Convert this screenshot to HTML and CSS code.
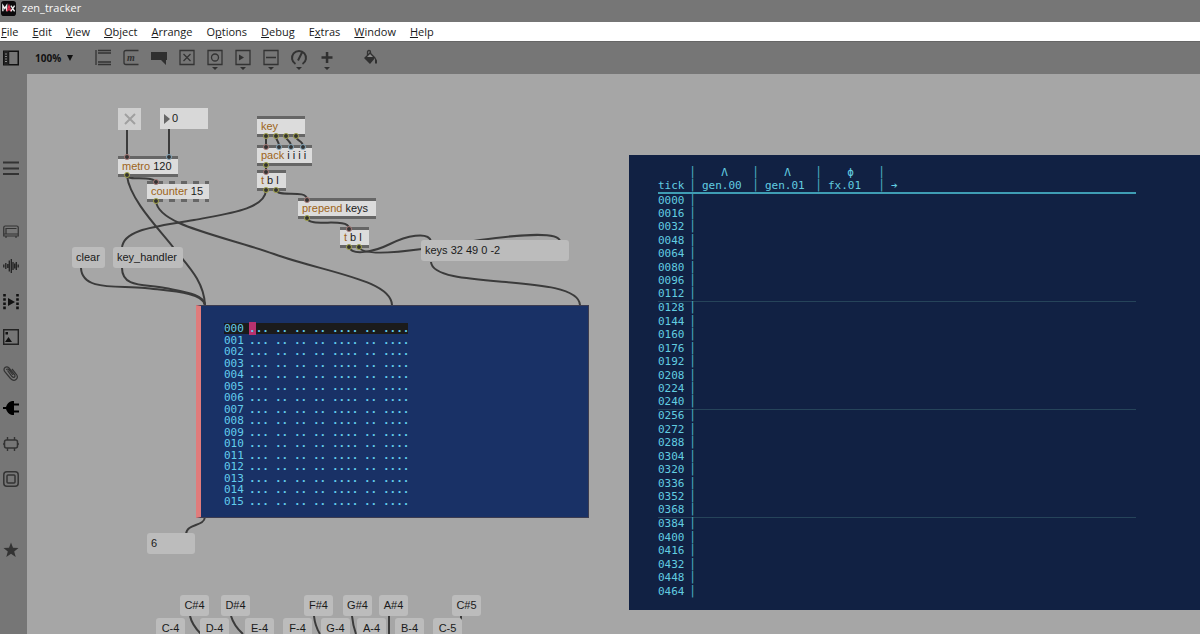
FILE: index.html
```html
<!DOCTYPE html>
<html lang="en">
<head>
<meta charset="utf-8">
<title>zen_tracker</title>
<link rel="stylesheet" href="styles.css">
</head>
<body>
<header class="titlebar">
  <svg class="logo" viewBox="0 0 16 16" aria-hidden="true"><rect width="16" height="16" rx="3" fill="#0c0a0c"/><g fill="none" stroke-width="1.5"><path d="M2 11V5l2 3 2-3v6" stroke="#eee"/><path d="M6.500 11 8.500 5l2 6M7 9.500h3" stroke="#e0304f"/><path d="m10.500 5 4 6m0-6-4 6" stroke="#eee"/></g></svg>
  <h1 class="title">zen_tracker</h1>
</header>
<nav class="menubar" aria-label="Main menu">
  <button><u>F</u>ile</button><button><u>E</u>dit</button><button><u>V</u>iew</button><button><u>O</u>bject</button><button><u>A</u>rrange</button><button>O<u>p</u>tions</button><button><u>D</u>ebug</button><button>E<u>x</u>tras</button><button><u>W</u>indow</button><button><u>H</u>elp</button>
</nav>
<div class="toolbar">
  <button class="tool side" aria-label="Toggle sidebar"><svg width="16" height="16" viewBox="0 0 16 16"><path d="M.75 1.250h14.500v13.500H.75zM5.500 1v14" fill="none" stroke="#111" stroke-width="1.500"/><path d="M1 1h4.500v14H1z" fill="#222"/><path d="M2 4h2M2 6.500h2M2 9h2M2 11.500h2" stroke="#888"/></svg></button>
  <label class="zoom"><select aria-label="Zoom"><option>100%</option></select><svg width="6" height="6" viewBox="0 0 6 6"><path d="M0 0h6L3 6z" fill="#111"/></svg></label>
  <div class="tools">
    <button class="tool" aria-label="Object"><svg viewBox="0 0 16 22"><path d="M1 3v15M3 3.500h13M3 6h13M3 15h13M3 17.500h13" class="l"/></svg></button>
    <button class="tool" aria-label="Message"><svg viewBox="0 0 16 22"><path d="M15.500 3.500H3q-2 0-2 2v10q0 2 2 2h12.500" class="l"/><text x="4" y="14" class="m">m</text></svg></button>
    <button class="tool" aria-label="Comment"><svg viewBox="0 0 16 22"><path d="M0 5h16v8h-1v5l-5-5H0z" class="f"/></svg></button>
    <button class="tool" aria-label="Toggle"><svg viewBox="0 0 16 22"><path d="M1 3.500h14v14H1zM4.500 7l7 7m0-7-7 7" class="l"/></svg></button>
    <button class="tool" aria-label="Button"><svg viewBox="0 0 16 22"><path d="M1 3.500h14v14H1z" class="l"/><circle cx="8" cy="10.500" r="3.500" class="l"/><path d="M5 20h6l-3 3z" class="f"/></svg></button>
    <button class="tool" aria-label="Number"><svg viewBox="0 0 16 22"><path d="M1 3.500h14v14H1z" class="l"/><path d="m4 7.500 5 3-5 3zM5 20h6l-3 3z" class="f"/></svg></button>
    <button class="tool" aria-label="Slider"><svg viewBox="0 0 16 22"><path d="M1 3.500h14v14H1zM3 10.500h10" class="l"/><path d="M5 20h6l-3 3z" class="f"/></svg></button>
    <button class="tool" aria-label="Dial"><svg viewBox="0 0 16 22"><path d="M4.500 17a7 7 0 1 1 7 0M7 13.500l4-8" class="l thick"/><path d="M5 20h6l-3 3z" class="f"/></svg></button>
    <button class="tool" aria-label="Add"><svg viewBox="0 0 16 22"><path d="M6.800 5h2.500v4.300h4.200v2.500H9.300V16H6.800v-4.200H2.500V9.300h4.300zM5 20h6l-3 3z" class="f"/></svg></button>
  </div>
  <button class="tool" aria-label="Format"><svg viewBox="0 0 16 22"><path d="M2 11 8 5l5.500 5.500L8 17zM13 10l2 3.500v3h-2v-4z" class="f"/><path d="M5.500 8V5q0-1.500 1.500-1.500T8.500 5v3" class="l"/><path d="m5 10 3-3 3 3z" fill="#8a8a8a"/></svg></button>
</div>
<div class="work">
  <aside class="sidebar" aria-label="Browser">
    <button class="icon" aria-label="List"><svg viewBox="0 0 16 16"><path d="M0 2.500h16M0 8.500h16M0 14h16" stroke="#333" stroke-width="2"/></svg></button>
    <div class="icon-group">
      <button class="icon" aria-label="Packages"><svg viewBox="0 0 16 16"><path d="M.75 4.500q0-1.500 1.500-1.500h11.500q1.500 0 1.500 1.500v8.500H.75zM3 5.500h10.500M1 11h14M3 13v2M13 13v2M3 5v6" fill="none" stroke="#333" stroke-width="1.200"/></svg></button>
      <button class="icon" aria-label="Audio"><svg viewBox="0 0 16 16"><path d="M.8 6.500v3M2.800 5v6M4.800 6v4M6.300 2.500v11M8.300 1v14M10 4v8M11.700 5.500v5M13.300 4v8M15.200 6.500v3" stroke="#222" stroke-width="1.300"/></svg></button>
      <button class="icon" aria-label="Video"><svg viewBox="0 0 16 16"><path d="M1.500 0v16M14.500 0v16" stroke="#111" stroke-width="2.600" stroke-dasharray="2.600 1.600"/><path d="m5 4 7 4-7 4z" fill="#111"/></svg></button>
      <button class="icon" aria-label="Images"><svg viewBox="0 0 16 16"><path d="M.7.7h14.600v14.600H.7z" fill="none" stroke="#222" stroke-width="1.400"/><path d="m2 13 3.500-5L9 13zM2.500 3h2.500v2.500H2.500z" fill="#111"/></svg></button>
      <button class="icon" aria-label="Files"><svg viewBox="0 0 16 16"><path d="M4.500 5.500 9 11.500q1.500 1.500 2.500.500t0-2.500L6 3Q4 .8 2 2.500T2 7l5.500 6.500q3 3 5.500 1t.5-5L9 4M3.500 5q.5-2 2.500 0l4 5" fill="none" stroke="#333" stroke-width="1.200"/></svg></button>
      <button class="icon" aria-label="Plug-ins"><svg viewBox="0 0 16 16"><path d="M0 7h3q1.500-5 6-6h2v2.500h5v2h-5v5h5v2h-5V15H9q-4.500-1-6-6H0z" fill="#000"/></svg></button>
      <button class="icon" aria-label="Devices"><svg viewBox="0 0 16 16"><rect x="1.500" y="4" width="13" height="8" rx="2" fill="none" stroke="#333" stroke-width="1.500"/><path d="M4.500 1v3M11.500 1v3M4.500 12v3M11.500 12v3M0 8h1.500M14.500 8H16" stroke="#333" stroke-width="1.400"/></svg></button>
      <button class="icon" aria-label="Snippets"><svg viewBox="0 0 16 16"><rect x=".8" y=".8" width="14.400" height="14.400" rx="3" fill="none" stroke="#333" stroke-width="1.500"/><rect x="4" y="4" width="8" height="8" rx="1" fill="none" stroke="#333" stroke-width="1.500"/></svg></button>
    </div>
    <button class="icon" aria-label="Favorites"><svg viewBox="0 0 16 16"><path d="m8 .5 2 5.300 5.500.2-4.300 3.500 1.500 5.500L8 11.800 3.300 15l1.500-5.500L.5 6l5.500-.2z" fill="#333"/></svg></button>
  </aside>
  <main class="canvas">
    <svg class="wires" width="1173" height="560" viewBox="27 74 1173 560" aria-hidden="true">
      <path d="M127 130V156M169 129V156"/>
      <path d="M127 176C128 181 155 175 156 183"/>
      <path d="M127 176C130 200 160 230 173 247S204 280 205 305"/>
      <path d="M156 201C158 225 220 235 274 254S391 280 392 305"/>
      <path d="M266 190C265 210 225 214 194 220S123 228 122 248"/>
      <path d="M81 268C82 292 120 285 145 288S203 292 205 305"/>
      <path d="M122 268C122 288 145 284 165 288S204 294 205 305"/>
      <path d="M276 190C278 198 306 189 307 199M307 218C309 228 348 217 349 228"/>
      <path d="M349 247C352 256 374 252 390 244S428 231 431 241"/>
      <path d="M359 247C362 256 400 252 422 249L480 240C510 236 558 230 560 241"/>
      <path d="M431 262C433 291 578 272 580 305"/>
      <path d="M205 517C204 527 187 523 186 534"/>
      <path d="M190 616Q192 625 201 634M231 616Q234 626 243 634M314 616Q315 626 320 634M352 616Q353 626 356 634M389 616V634M461 616V620"/>
    </svg>

    <label class="toggle n-toggle"><input type="checkbox" aria-label="Run metro"><svg width="12" height="12" viewBox="0 0 12 12"><path d="m1 1 10 10m0-10-10 10" stroke="#a0a0a0" stroke-width="2"/></svg></label>
    <label class="number n-number"><svg width="6" height="10" viewBox="0 0 6 10"><path d="m0 0 6 5-6 5z" fill="#666"/></svg><input type="text" value="0" aria-label="Tempo"></label>

    <div class="object n-metro"><b>metro</b> 120</div>
    <div class="object n-counter"><b>counter</b> 15</div>
    <div class="object n-key"><b>key</b></div>
    <div class="object n-pack"><b>pack</b> i i i i</div>
    <div class="object n-tbl"><b>t</b> b l</div>
    <div class="object n-prepend"><b>prepend</b> keys</div>
    <div class="object n-tbl2"><b>t</b> b l</div>

    <button class="message n-clear">clear</button>
    <button class="message n-handler">key_handler</button>
    <button class="message n-keys">keys 32 49 0 -2</button>
    <button class="message n-six">6</button>
    <button class="message note n-cs4">C#4</button>
    <button class="message note n-ds4">D#4</button>
    <button class="message note n-fs4">F#4</button>
    <button class="message note n-gs4">G#4</button>
    <button class="message note n-as4">A#4</button>
    <button class="message note n-cs5">C#5</button>
    <button class="message note n-c4">C-4</button>
    <button class="message note n-d4">D-4</button>
    <button class="message note n-e4">E-4</button>
    <button class="message note n-f4">F-4</button>
    <button class="message note n-g4">G-4</button>
    <button class="message note n-a4">A-4</button>
    <button class="message note n-b4">B-4</button>
    <button class="message note n-c5">C-5</button>

    <section class="pattern" aria-label="Pattern">
      <table>
        <tbody id="pattern-rows"></tbody>
      </table>
    </section>

    <section class="timeline" aria-label="Timeline">
      <table>
        <colgroup><col class="c-tick"><col class="c-bar"><col class="c-name"><col class="c-bar"><col class="c-name"><col class="c-bar"><col class="c-name"><col class="c-bar"><col></colgroup>
        <thead>
          <tr><td></td><td class="bar">|</td><th>Λ</th><td class="bar">|</td><th>Λ</th><td class="bar">|</td><th>ϕ</th><td class="bar">|</td><td></td></tr>
          <tr class="names"><th>tick</th><td class="bar">|</td><th>gen.00</th><td class="bar">|</td><th>gen.01</th><td class="bar">|</td><th>fx.01</th><td class="bar">|</td><th>➔</th></tr>
        </thead>
        <tbody id="timeline-rows"></tbody>
      </table>
    </section>

    <svg class="wires" width="1173" height="560" viewBox="27 74 1173 560" aria-hidden="true">
      <g class="gaps"><path d="M163 182.500h6M175 182.500h6M187 182.500h6M199 182.500h6M163 200.500h6M175 200.500h6M187 200.500h6M199 200.500h6"/></g>
      <path d="M266 136V147M276 136C276 142 279 139 279 147M286 136C286 142 291 139 291 147M296 136C296 142 303 139 303 147M266 165V172"/>
      <g class="out"><circle cx="127" cy="175" r="2.500"/><circle cx="156" cy="201" r="2.500"/><circle cx="266" cy="136" r="2.500"/><circle cx="276" cy="136" r="2.500"/><circle cx="286" cy="136" r="2.500"/><circle cx="296" cy="136" r="2.500"/><circle cx="266" cy="165" r="2.500"/><circle cx="266" cy="190" r="2.500"/><circle cx="276" cy="190" r="2.500"/><circle cx="307" cy="218" r="2.500"/><circle cx="349" cy="247" r="2.500"/><circle cx="359" cy="247" r="2.500"/></g>
      <g class="in-hot"><circle cx="127" cy="157" r="2.500"/><circle cx="156" cy="182" r="2.500"/><circle cx="266" cy="147" r="2.500"/><circle cx="266" cy="172" r="2.500"/><circle cx="307" cy="200" r="2.500"/><circle cx="349" cy="229" r="2.500"/></g>
      <g class="in-cold"><circle cx="169" cy="157" r="2.500"/><circle cx="279" cy="147" r="2.500"/><circle cx="291" cy="147" r="2.500"/><circle cx="303" cy="147" r="2.500"/></g>
    </svg>
  </main>
</div>
<script src="app.js"></script>
</body>
</html>
```

FILE: styles.css
```css
* { box-sizing: border-box; }
body {
  margin: 0;
  height: 100vh;
  display: flex;
  flex-direction: column;
  overflow: hidden;
  background: #767676;
  color: #1a1a1a;
  font: 11px/16px "Open Sans", sans-serif;
}
button, input, select { font: inherit; color: inherit; border: 0; padding: 0; margin: 0; background: none; }
svg { display: block; }

.titlebar { display: flex; align-items: center; gap: 6px; height: 22px; padding: 0 1px 6px; }
.logo { width: 15px; height: 15px; }
.title { margin: 0; font-size: 11px; font-weight: 400; color: #fafafa; }
.menubar { display: flex; gap: 14px; height: 19px; padding: 0 1px; background: #fff; align-items: center; }
.menubar button { line-height: 16px; }
.menubar u { text-underline-offset: 1px; }

.toolbar { display: flex; align-items: center; height: 33px; padding: 0 3px 1px; border-top: 1px solid #666; }
.tool { display: flex; justify-content: center; width: 28px; }
.tool.side { width: 16px; }
.tools { display: flex; margin-right: 15px; }
.tools svg, .toolbar > .tool:last-child svg { width: 16px; height: 22px; overflow: visible; }
.tool .l { fill: none; stroke: #333; stroke-width: 1.3; }
.tool .thick { stroke-width: 2; }
.tool .f { fill: #303030; }
.tool .m { font: italic bold 10px "Liberation Serif", serif; fill: #303030; }
.zoom { display: flex; align-items: center; gap: 5px; margin: 0 16px; }
.zoom select { appearance: none; width: 27px; font-size: 10px; font-weight: 700; color: #111; }

.work { flex: 1; display: flex; min-height: 0; }
.sidebar { width: 28px; padding: 86px 3px 0; border-right: 1px solid #858585; display: flex; flex-direction: column; }
.icon { width: 16px; height: 16px; }
.icon svg { width: 16px; height: 16px; }
.icon-group { display: flex; flex-direction: column; justify-content: space-between; height: 264px; margin: 47px 0 55px; }

.canvas {
  position: relative;
  flex: 1;
  margin-left: -1px;
  overflow: hidden;
  background: #a6a6a6;
  font: 11px/15px "Liberation Sans", Arial, sans-serif;
}
.wires { position: absolute; left: 0; top: 0; pointer-events: none; }
.wires path { fill: none; stroke: #3b3b3b; stroke-width: 2; }
.wires .gaps path { stroke: #a6a6a6; stroke-width: 3; }
.wires circle { fill: #333; stroke-width: 1; }
.out circle { stroke: #a4a548; }
.in-hot circle { stroke: #a87a78; }
.in-cold circle { stroke: #86a9bd; }

.object, .message, .toggle, .number { position: absolute; white-space: pre; }
.object { height: 21px; padding: 0 4px; border: solid #666; border-width: 3px 0; background: #dcdcdc; }
.object b { font-weight: 400; color: #9c6419; }
.message { height: 21px; padding: 0 4px; border-radius: 3px; background: #bcbcbc; text-align: left; }
.note { width: 29px; padding: 0; text-align: center; }
.toggle { display: grid; place-items: center; width: 23px; height: 22px; background: #cfcfcf; }
.toggle input { position: absolute; inset: 0; opacity: 0; }
.number { display: flex; align-items: center; gap: 2px; width: 48px; height: 21px; padding: 0 4px; background: #d8d8d8; }
.number input { width: 100%; min-width: 0; }
.number svg { flex: none; }

.n-toggle { left: 91px; top: 34px; }
.n-number { left: 133px; top: 34px; }
.n-metro { left: 91px; top: 82px; width: 60px; }
.n-counter { left: 120px; top: 107px; width: 62px; }
.n-key { left: 230px; top: 42px; width: 48px; }
.n-pack { left: 230px; top: 71px; width: 55px; }
.n-tbl { left: 230px; top: 96px; width: 29px; }
.n-prepend { left: 271px; top: 124px; width: 78px; }
.n-tbl2 { left: 313px; top: 153px; width: 29px; }
.n-clear { left: 45px; top: 173px; width: 33px; }
.n-handler { left: 86px; top: 173px; width: 70px; }
.n-keys { left: 394px; top: 166px; width: 148px; }
.n-six { left: 120px; top: 459px; width: 48px; }
.n-cs4, .n-ds4, .n-fs4, .n-gs4, .n-as4, .n-cs5 { top: 521px; }
.n-c4, .n-d4, .n-e4, .n-f4, .n-g4, .n-a4, .n-b4, .n-c5 { top: 544px; }
.n-cs4 { left: 153px; }
.n-ds4 { left: 194px; }
.n-fs4 { left: 277px; }
.n-gs4 { left: 316px; }
.n-as4 { left: 352px; }
.n-cs5 { left: 425px; }
.n-c4 { left: 129px; }
.n-d4 { left: 173px; }
.n-e4 { left: 218px; }
.n-f4 { left: 256px; }
.n-g4 { left: 294px; }
.n-a4 { left: 330px; }
.n-b4 { left: 368px; }
.n-c5 { left: 406px; }

.pattern, .timeline { position: absolute; font-family: "DejaVu Sans Mono", monospace; font-size: 11px; line-height: 11px; }
.pattern table, .timeline table { border-collapse: collapse; table-layout: fixed; }
.pattern th, .pattern td, .timeline th, .timeline td { padding: 0; font-weight: 400; text-align: left; white-space: pre; }

.pattern {
  left: 169px;
  top: 231px;
  width: 393px;
  padding: 17px 0 10px 23px;
  border: 1px solid #3c3c50;
  border-left: 5px solid #e07c7c;
  background: #193166;
  color: #62cdec;
}
.pattern table { width: 184px; }
.pattern tr { height: 11px; }
.pattern tr:nth-child(even) { height: 12px; }
.pattern tr.current { background: #1b1b1b; }
.pattern td { font-weight: 700; }
.pattern th { width: 25px; }
.pattern .g3 { width: 26px; }
.pattern .g2 { width: 19px; }
.pattern .g4 { width: 32px; }
.pattern .last { width: 25px; }
.cursor { background: #b8326e; }

.timeline { left: 602px; right: 0; top: 81px; padding: 11px 64px 12px 29px; background: #112143; color: #62cde0; }
.timeline table { width: 100%; }
.timeline tr { height: 13px; }
.timeline tr:nth-child(even) { height: 14px; }
.timeline .names { height: 13px; border-bottom: 2px solid #3f9db4; }
.timeline .beat { border-top: 1px solid #26445a; }
.timeline .bar { font-size: 12px; color: #4aa9bf; }
.timeline thead tr:first-child th { text-align: center; }
.timeline thead .names th:not(:first-child) { padding-left: 5px; }
.c-tick { width: 31px; }
.c-bar { width: 8px; }
.c-name { width: 55px; }
```

FILE: app.js
```js
const groups = [3, 2, 2, 2, 4, 2, 4];
const pad = (n, size) => String(n).padStart(size, "0");

document.getElementById("pattern-rows").innerHTML = Array.from({ length: 16 }, (_, row) => {
  const cells = groups.map((size, i) => {
    const dots = row === 0 && i === 0 ? '<span class="cursor">.</span>..' : ".".repeat(size);
    const last = i === groups.length - 1 ? " last" : "";
    return `<td class="g${size}${last}">${dots}</td>`;
  }).join("");
  return `<tr${row === 0 ? ' class="current"' : ""}><th>${pad(row, 3)}</th>${cells}</tr>`;
}).join("");

document.getElementById("timeline-rows").innerHTML = Array.from({ length: 30 }, (_, row) => {
  const beat = row > 0 && row % 8 === 0 ? ' class="beat"' : "";
  return `<tr${beat}><th>${pad(row * 16, 4)}</th><td class="bar">|</td><td colspan="7"></td></tr>`;
}).join("");
```
